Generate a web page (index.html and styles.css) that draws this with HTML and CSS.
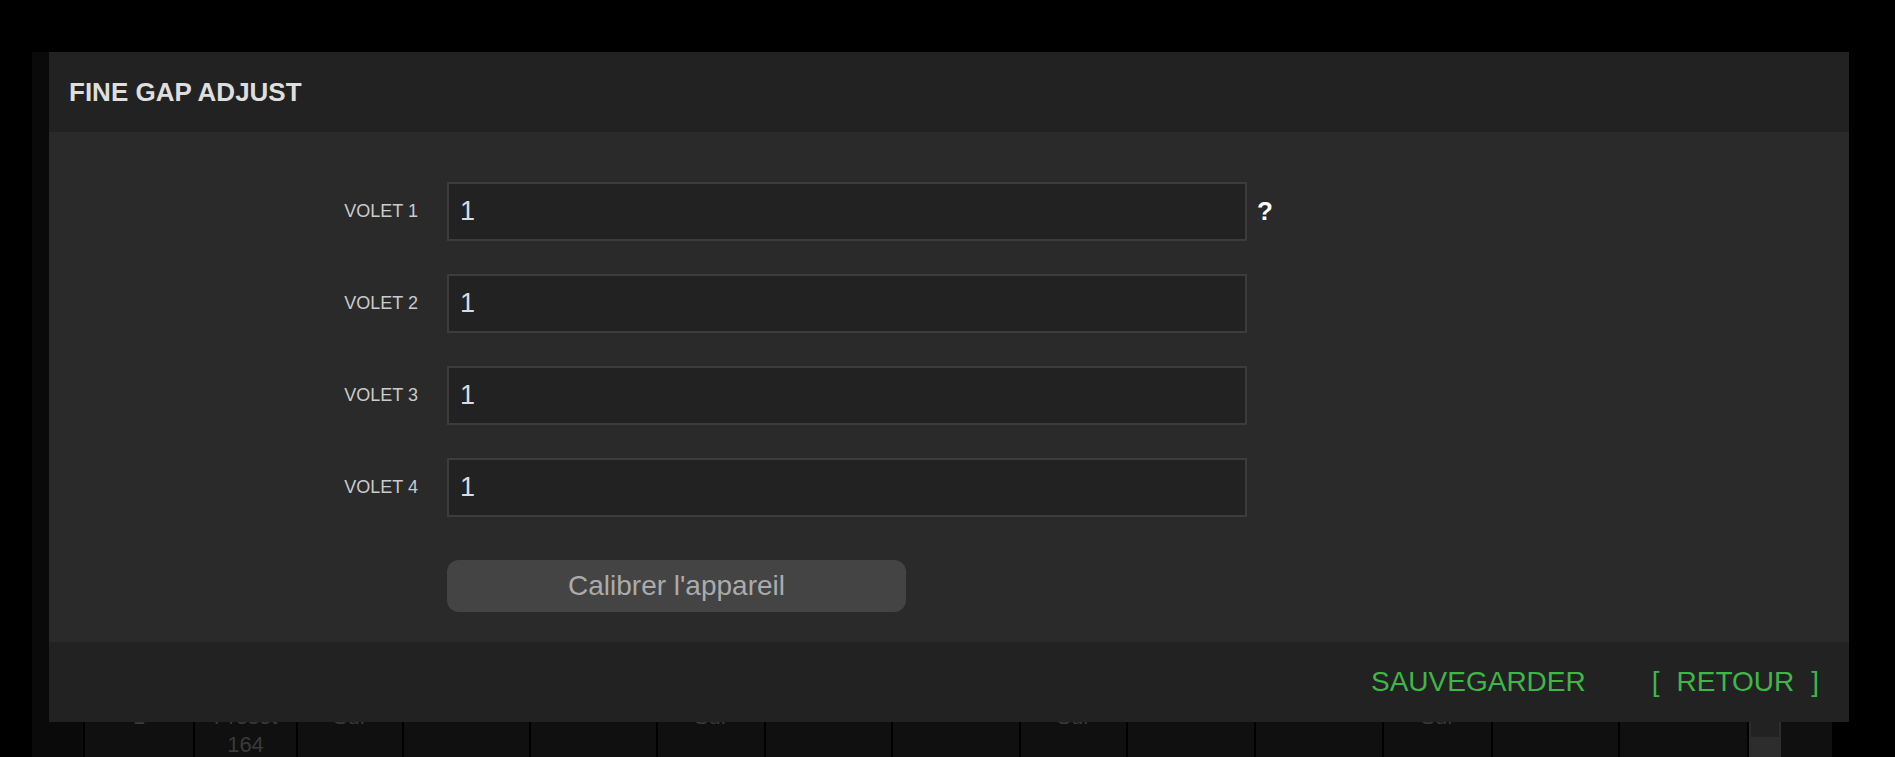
FILE: index.html
```html
<!DOCTYPE html>
<html lang="fr">
<head>
<meta charset="utf-8">
<title>Fine gap adjust</title>
<link rel="stylesheet" href="styles.css">
</head>
<body>
<div class="page">
  <div class="panel">
    <div class="table-row">
      <div class="lead"></div>
      <div class="cell">1</div>
      <div class="cell">Preset 164</div>
      <div class="cell">Sur</div>
      <div class="cell"></div>
      <div class="cell"></div>
      <div class="cell">Sur</div>
      <div class="cell"></div>
      <div class="cell"></div>
      <div class="cell">Sur</div>
      <div class="cell"></div>
      <div class="cell"></div>
      <div class="cell">Sur</div>
      <div class="cell"></div>
      <div class="cell"></div>
      <div class="scroll"><div class="scroll-thumb"></div></div>
      <div class="cell last"></div>
    </div>
  </div>

  <div class="modal">
    <div class="modal-header">FINE GAP ADJUST</div>
    <div class="modal-body">
      <div class="form-row">
        <label class="label">VOLET 1</label>
        <div class="input">1</div>
        <span class="help">?</span>
      </div>
      <div class="form-row">
        <label class="label">VOLET 2</label>
        <div class="input">1</div>
      </div>
      <div class="form-row">
        <label class="label">VOLET 3</label>
        <div class="input">1</div>
      </div>
      <div class="form-row">
        <label class="label">VOLET 4</label>
        <div class="input">1</div>
      </div>
      <div class="btn-row">
        <button class="btn">Calibrer l'appareil</button>
      </div>
    </div>
    <div class="modal-footer">
      <span class="action">SAUVEGARDER</span>
      <span class="action back"><span>[</span><span class="back-label">RETOUR</span><span>]</span></span>
    </div>
  </div>
</div>
</body>
</html>
```

FILE: styles.css
```css
* { box-sizing: border-box; }

html, body {
  margin: 0;
  padding: 0;
  background: #000;
  font-family: "Liberation Sans", Arial, sans-serif;
  overflow: hidden;
}

.page {
  position: relative;
  width: 1895px;
  height: 757px;
  padding-top: 52px;
  overflow: hidden;
}

/* background application panel */
.panel {
  margin-left: 32px;
  width: 1800px;
  height: 705px;
  background: #0a0a0a;
  padding-top: 648px;
}

.table-row {
  display: grid;
  grid-template-columns: 51px 110px 103px 106px 127px 127px 108px 127px 128px 107px 128px 128px 109px 127px 129px 34px 51px;
  height: 120px;
}

.lead { background: #0a0a0a; }

.cell {
  background: #101010;
  border-left: 2px solid #000;
  color: #3a3a3a;
  font-size: 22px;
  line-height: 28px;
  text-align: center;
  padding: 3px 10px 0;
}

.cell.last { border-left: none; }

.scroll {
  background: #2d2d2d;
  border-left: 2px solid #000;
  padding: 22px 2px 0;
}

.scroll-thumb {
  height: 15px;
  background: #222;
}

/* modal */
.modal {
  position: absolute;
  top: 52px;
  left: 49px;
  width: 1800px;
  height: 670px;
  display: flex;
  flex-direction: column;
}

.modal-header {
  height: 80px;
  background: #222;
  color: #dedede;
  font-weight: bold;
  font-size: 26px;
  display: flex;
  align-items: center;
  padding-left: 20px;
}

.modal-body {
  height: 510px;
  background: #2a2a2a;
  padding: 50px 0 30px;
  display: flex;
  flex-direction: column;
  gap: 33px;
}

.form-row {
  display: flex;
  align-items: center;
  height: 59px;
}

.label {
  width: 369px;
  text-align: right;
  color: #cbcbcb;
  font-size: 18px;
  margin-right: 29px;
}

.input {
  width: 800px;
  height: 59px;
  background: #222;
  border: 2px solid #3c3c3c;
  color: #dcdcdc;
  font-size: 27px;
  display: flex;
  align-items: center;
  padding-left: 11px;
}

.help {
  margin-left: 10px;
  color: #fff;
  font-weight: bold;
  font-size: 26px;
}

.btn-row {
  padding-left: 398px;
  margin-top: 10px;
}

.btn {
  width: 459px;
  height: 52px;
  border: none;
  border-radius: 12px;
  background: #444;
  color: #ababab;
  font-family: "Liberation Sans", Arial, sans-serif;
  font-size: 28px;
  padding: 0;
}

.modal-footer {
  height: 80px;
  background: #222;
  display: flex;
  align-items: center;
  justify-content: flex-end;
  gap: 66px;
  padding-right: 30px;
}

.action {
  color: #3fb64a;
  font-size: 28px;
}

.back-label {
  margin: 0 17px;
}
```
